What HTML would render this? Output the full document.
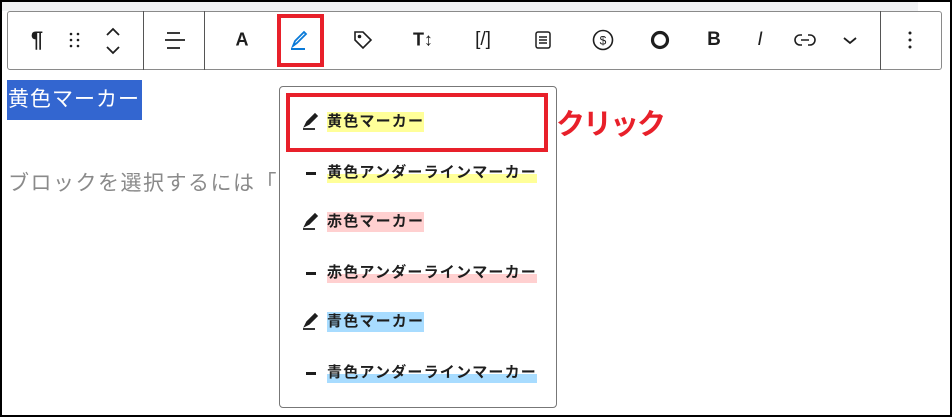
<!DOCTYPE html>
<html><head><meta charset="utf-8"><style>
*{margin:0;padding:0;box-sizing:border-box}
body{width:952px;height:417px;position:relative;background:#fff;font-family:"Liberation Sans","Noto Sans CJK JP",sans-serif;overflow:hidden}
.frame{position:absolute;left:0;top:0;width:952px;height:417px;border:2px solid #000}
.strip{position:absolute;left:2px;top:2px;width:916px;height:9px;background:#f1f2f4}
.tb{position:absolute;left:7px;top:11px;width:935px;height:59px;border:1.5px solid #8a8a8a;border-radius:3px;background:#fff}
.sep{position:absolute;top:11px;width:1px;height:59px;background:#555}
.ic{position:absolute;top:40px;transform:translate(-50%,-50%);color:#1e1e1e;font-weight:bold}
svg.i{position:absolute}
.sel{position:absolute;left:7px;top:80px;width:135px;height:40px;background:#3366d0;color:#fff;font-size:21px;line-height:40px;padding-left:1px;letter-spacing:1px;white-space:nowrap}
.ph{position:absolute;left:8px;top:167px;font-size:21px;color:#8a8a8a;letter-spacing:1.5px;white-space:nowrap}
.pop{position:absolute;left:279px;top:86px;width:278px;height:322px;border:1.5px solid #777;border-radius:4px;background:#fff}
.item{position:absolute;left:327px;font-size:15px;font-weight:bold;color:#1e1e1e;line-height:20px;letter-spacing:1.2px;white-space:nowrap}
.redbox{position:absolute;left:286px;top:93px;width:262px;height:59px;border:4px solid #e8202a}
.click{position:absolute;left:556px;top:101px;font-size:29px;font-weight:bold;color:#e8202a;letter-spacing:-2px}
.dash{position:absolute;left:306px;width:10px;height:2.5px;background:#1e1e1e}
</style></head><body>
<div class="frame"></div>
<div class="strip"></div>
<div class="tb"></div>
<div class="sep" style="left:143px"></div>
<div class="sep" style="left:204px"></div>
<div class="sep" style="left:880px"></div>
<div class="ic" style="left:37px;font-size:22px">¶</div>
<svg class="i" style="left:68px;top:32px" width="14" height="16"><g fill="#1e1e1e"><circle cx="3" cy="2" r="1.3"/><circle cx="10" cy="2" r="1.3"/><circle cx="3" cy="8" r="1.3"/><circle cx="10" cy="8" r="1.3"/><circle cx="3" cy="14" r="1.3"/><circle cx="10" cy="14" r="1.3"/></g></svg>
<svg class="i" style="left:105px;top:27px" width="16" height="28" fill="none" stroke="#1e1e1e" stroke-width="1.8"><path d="M2 8 L8 2 L14 8 M2 20 L8 26 L14 20"/></svg>
<svg class="i" style="left:164px;top:31px" width="22" height="20" stroke="#1e1e1e" stroke-width="1.8"><path d="M3 2H16M1 9H21M3 17H16"/></svg>
<div class="ic" style="left:242px;font-size:18px">A</div>
<div style="position:absolute;left:277px;top:14px;width:47px;height:53px;border:4px solid #e8202a"></div>
<svg class="i" style="left:290px;top:30px" width="18" height="20" fill="none" stroke="#0a7ad8" stroke-width="1.8"><path d="M3 16 L5 11 L14 2 L16 4 L7 13 Z"/><path d="M1 19H15" stroke-width="2"/></svg>
<svg class="i" style="left:353px;top:30px" width="20" height="20" fill="none" stroke="#1e1e1e" stroke-width="1.6"><path d="M2 2H10L18 10L10 18L2 10Z"/><circle cx="6.5" cy="6.5" r="1" fill="#1e1e1e"/></svg>
<div class="ic" style="left:423px;font-size:18px">T↕</div>
<div class="ic" style="left:483px;font-size:19px;font-weight:normal">[/]</div>
<svg class="i" style="left:535px;top:31px" width="16" height="18" fill="none" stroke="#1e1e1e" stroke-width="1.5"><rect x="1" y="1" width="14" height="16" rx="2"/><path d="M4 6H12M4 9H12M4 12H12"/></svg>
<svg class="i" style="left:592px;top:29px" width="22" height="22" fill="none" stroke="#1e1e1e" stroke-width="1.6"><circle cx="11" cy="11" r="9.5"/><text x="11" y="15.5" font-size="12" text-anchor="middle" fill="#1e1e1e" stroke="none" font-family="Liberation Sans">$</text></svg>
<svg class="i" style="left:650px;top:30px" width="20" height="20" fill="none" stroke="#1e1e1e" stroke-width="3.2"><circle cx="10" cy="10" r="7.5"/></svg>
<div class="ic" style="left:714px;font-size:19px">B</div>
<div class="ic" style="left:760px;font-size:19px;font-weight:normal;font-style:italic">I</div>
<svg class="i" style="left:794px;top:33px" width="22" height="14" fill="none" stroke="#1e1e1e" stroke-width="1.6"><path d="M8 2H6A5 5 0 0 0 6 12H8M14 2H16A5 5 0 0 1 16 12H14M7 7H15"/></svg>
<svg class="i" style="left:843px;top:37px" width="14" height="8" fill="none" stroke="#1e1e1e" stroke-width="1.8"><path d="M1 1L7 6L13 1"/></svg>
<svg class="i" style="left:908px;top:30px" width="4" height="20" fill="#1e1e1e"><circle cx="2" cy="3" r="1.5"/><circle cx="2" cy="10" r="1.5"/><circle cx="2" cy="17" r="1.5"/></svg>

<div class="sel">黄色マーカー</div>
<div class="ph">ブロックを選択するには「</div>

<div class="pop"></div>
<div class="redbox"></div>
<div class="click">クリック</div>

<svg class="i" style="left:302px;top:112px" width="17" height="19" fill="none" stroke="#1e1e1e" stroke-width="1.6"><path d="M3 14 L5 10 L13 2 L15 4 L7 12 Z" fill="#1e1e1e"/><path d="M1 17H13" stroke-width="1.8"/></svg>
<div class="item" style="top:112px;background:#ffff99">黄色マーカー</div>
<div class="dash" style="top:172px"></div>
<div class="item" style="top:163px;background:linear-gradient(transparent 55%,#ffff99 55%)">黄色アンダーラインマーカー</div>
<svg class="i" style="left:302px;top:212px" width="17" height="19" fill="none" stroke="#1e1e1e" stroke-width="1.6"><path d="M3 14 L5 10 L13 2 L15 4 L7 12 Z" fill="#1e1e1e"/><path d="M1 17H13" stroke-width="1.8"/></svg>
<div class="item" style="top:212px;background:#ffd0d0">赤色マーカー</div>
<div class="dash" style="top:272px"></div>
<div class="item" style="top:263px;background:linear-gradient(transparent 55%,#ffd0d0 55%)">赤色アンダーラインマーカー</div>
<svg class="i" style="left:302px;top:312px" width="17" height="19" fill="none" stroke="#1e1e1e" stroke-width="1.6"><path d="M3 14 L5 10 L13 2 L15 4 L7 12 Z" fill="#1e1e1e"/><path d="M1 17H13" stroke-width="1.8"/></svg>
<div class="item" style="top:312px;background:#a8dcff">青色マーカー</div>
<div class="dash" style="top:372px"></div>
<div class="item" style="top:363px;background:linear-gradient(transparent 55%,#a8dcff 55%)">青色アンダーラインマーカー</div>
</body></html>
